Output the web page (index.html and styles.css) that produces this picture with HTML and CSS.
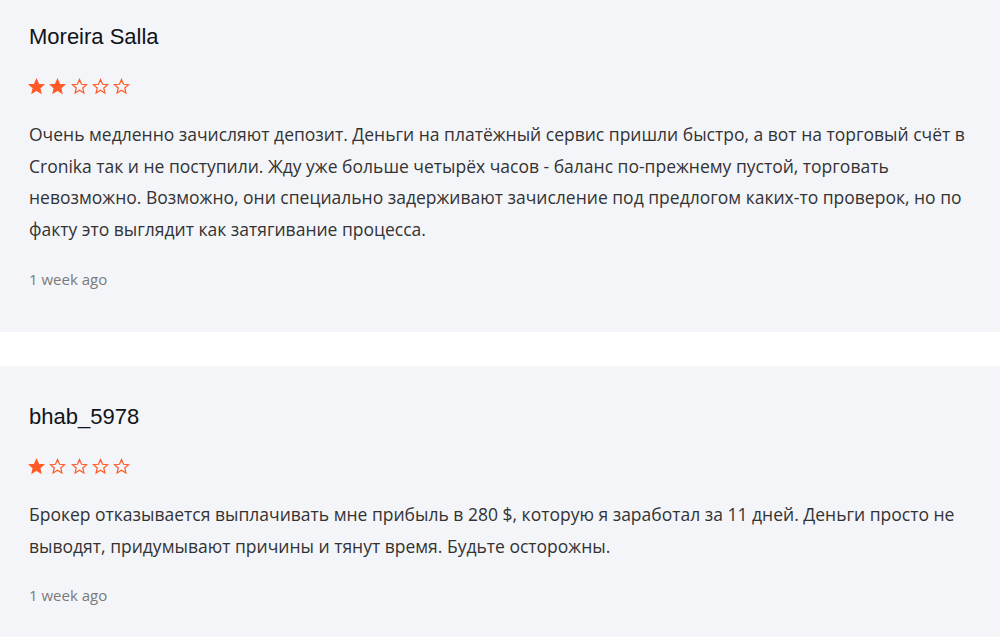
FILE: index.html
```html
<!DOCTYPE html>
<html lang="ru">
<head>
<meta charset="utf-8">
<link rel="stylesheet" href="styles.css">
</head>
<body>
<div class="list">
  <div class="review">
    <div class="name">Moreira Salla</div>
    <div class="stars">
      <svg class="star full" viewBox="0 0 24 24"><path d="M12 2.2l2.9 6.6 7.1.6-5.4 4.7 1.6 7-6.2-3.7-6.2 3.7 1.6-7L2 9.4l7.1-.6z"/></svg>
      <svg class="star full" viewBox="0 0 24 24"><path d="M12 2.2l2.9 6.6 7.1.6-5.4 4.7 1.6 7-6.2-3.7-6.2 3.7 1.6-7L2 9.4l7.1-.6z"/></svg>
      <svg class="star" viewBox="0 0 24 24"><path d="M12 2.2l2.9 6.6 7.1.6-5.4 4.7 1.6 7-6.2-3.7-6.2 3.7 1.6-7L2 9.4l7.1-.6z"/></svg>
      <svg class="star" viewBox="0 0 24 24"><path d="M12 2.2l2.9 6.6 7.1.6-5.4 4.7 1.6 7-6.2-3.7-6.2 3.7 1.6-7L2 9.4l7.1-.6z"/></svg>
      <svg class="star" viewBox="0 0 24 24"><path d="M12 2.2l2.9 6.6 7.1.6-5.4 4.7 1.6 7-6.2-3.7-6.2 3.7 1.6-7L2 9.4l7.1-.6z"/></svg>
    </div>
    <p class="text">Очень медленно зачисляют депозит. Деньги на платёжный сервис пришли быстро, а вот на торговый счёт в Cronika так и не поступили. Жду уже больше четырёх часов - баланс по-прежнему пустой, торговать невозможно. Возможно, они специально задерживают зачисление под предлогом каких-то проверок, но по факту это выглядит как затягивание процесса.</p>
    <div class="date">1 week ago</div>
  </div>
  <div class="review">
    <div class="name">bhab_5978</div>
    <div class="stars">
      <svg class="star full" viewBox="0 0 24 24"><path d="M12 2.2l2.9 6.6 7.1.6-5.4 4.7 1.6 7-6.2-3.7-6.2 3.7 1.6-7L2 9.4l7.1-.6z"/></svg>
      <svg class="star" viewBox="0 0 24 24"><path d="M12 2.2l2.9 6.6 7.1.6-5.4 4.7 1.6 7-6.2-3.7-6.2 3.7 1.6-7L2 9.4l7.1-.6z"/></svg>
      <svg class="star" viewBox="0 0 24 24"><path d="M12 2.2l2.9 6.6 7.1.6-5.4 4.7 1.6 7-6.2-3.7-6.2 3.7 1.6-7L2 9.4l7.1-.6z"/></svg>
      <svg class="star" viewBox="0 0 24 24"><path d="M12 2.2l2.9 6.6 7.1.6-5.4 4.7 1.6 7-6.2-3.7-6.2 3.7 1.6-7L2 9.4l7.1-.6z"/></svg>
      <svg class="star" viewBox="0 0 24 24"><path d="M12 2.2l2.9 6.6 7.1.6-5.4 4.7 1.6 7-6.2-3.7-6.2 3.7 1.6-7L2 9.4l7.1-.6z"/></svg>
    </div>
    <p class="text">Брокер отказывается выплачивать мне прибыль в 280 $, которую я заработал за 11 дней. Деньги просто не выводят, придумывают причины и тянут время. Будьте осторожны.</p>
    <div class="date">1 week ago</div>
  </div>
</div>
</body>
</html>
```
FILE: styles.css
```css
html, body {
  margin: 0;
  padding: 0;
  background: #ffffff;
}
.list {
  display: flex;
  flex-direction: column;
  gap: 34px;
  margin-top: -14px;
}
.review {
  background: #f4f5f9;
  padding: 38px 29px 40px 29px;
  height: 346px;
  box-sizing: border-box;
}
.review:last-child {
  height: auto;
}
.name {
  font-family: "Liberation Sans", Arial, sans-serif;
  font-size: 22px;
  line-height: 26px;
  color: #111318;
}
.stars {
  display: flex;
  gap: 4.3px;
  margin-top: 28px;
  height: 17px;
  margin-left: -1px;
}
.star {
  width: 17px;
  height: 17px;
  fill: none;
  stroke: #ff5a26;
  stroke-width: 1.7;
  stroke-linejoin: miter;
}
.star.full {
  fill: #ff5a26;
}
.text {
  margin: 24px 0 0 0;
  font-family: "Open Sans", sans-serif;
  font-size: 17.5px;
  line-height: 31.7px;
  color: #333333;
}
.date {
  margin-top: 22px;
  font-family: "Open Sans", sans-serif;
  font-size: 15px;
  line-height: 22px;
  color: #7a7a7a;
}
```
